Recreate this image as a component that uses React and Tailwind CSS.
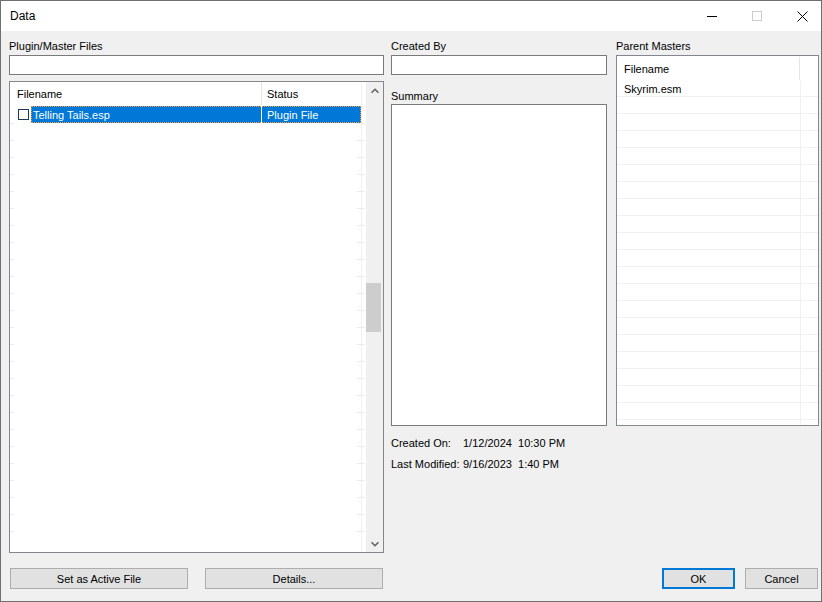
export default function App() {
  const leftTicks = Array.from({ length: 25 }, (_, i) => 123 + 17 * i - 82);
  const rightLines = Array.from({ length: 20 }, (_, i) => i);
  return (
    <div className="w-[822px] h-[602px] border border-[#707070] bg-[#f0f0f0] flex flex-col font-['Liberation_Sans',Arial,sans-serif] text-[11px] text-black overflow-hidden">
      {/* Title bar */}
      <div className="h-[30px] bg-white flex items-center shrink-0">
        <span className="ml-[9px] text-[12px] leading-none">Data</span>
        <div className="ml-auto mr-[13px] flex items-center">
          <svg width="10" height="10" viewBox="0 0 10 10" className="block">
            <path d="M0 5.5H10" stroke="#000" strokeWidth="1" />
          </svg>
          <svg width="10" height="10" viewBox="0 0 10 10" className="block ml-[35px]">
            <rect x="0.5" y="0.5" width="9" height="9" fill="none" stroke="#cccccc" strokeWidth="1" />
          </svg>
          <svg width="11" height="11" viewBox="0 0 11 11" className="block ml-[35px]">
            <path d="M0.5 0.5L10.5 10.5M10.5 0.5L0.5 10.5" stroke="#000" strokeWidth="1" />
          </svg>
        </div>
      </div>

      {/* Body */}
      <div className="flex-1 flex flex-col pl-[8px] pr-[2px] pt-[7px]">
        <div className="flex items-start">
          {/* Left column */}
          <div className="w-[375px] flex flex-col">
            <div className="h-[14px] leading-[16px]">Plugin/Master Files</div>
            <div className="mt-[3px] h-[20px] border border-[#7a7a7a] bg-white" />
            <div className="mt-[6px] h-[472px] border border-[#828790] bg-white flex">
              <div className="relative flex-1">
                {/* header */}
                <div className="h-[23px] pt-[2px] flex items-center relative">
                  <span className="ml-[7px]">Filename</span>
                  <span className="absolute left-[257px]">Status</span>
                  <div className="absolute left-[251px] top-0 h-[23px] w-px bg-[#e5e5e5]" />
                </div>
                {/* vertical grid at right */}
                <div className="absolute left-[351px] top-0 bottom-0 w-px bg-[#f0f0f0]" />
                {leftTicks.map((t) => (
                  <div key={t} className="contents">
                    <div className="absolute left-[347px] w-[8px] h-px bg-[#ececec]" style={{ top: t }} />
                    <div className="absolute left-0 w-[4px] h-px bg-[#ececec]" style={{ top: t }} />
                  </div>
                ))}
                {/* row */}
                <div className="mt-px h-[17px] flex items-center relative">
                  <div className="ml-[8px] w-[11px] h-[11px] border border-[#1f3a55] bg-white" />
                  <div className="absolute left-[21px] top-0 w-[330px] h-[17px] bg-[#0078d7] outline outline-1 outline-dotted outline-[#f59a3c] -outline-offset-1 text-white flex items-center pt-px">
                    <span className="ml-[2px]">Telling Tails.esp</span>
                    <div className="absolute left-[230px] top-0 h-[17px] w-px bg-white" />
                    <span className="absolute left-[236px]">Plugin File</span>
                  </div>
                </div>
              </div>
              {/* scrollbar */}
              <div className="w-[17px] bg-[#f0f0f0] flex flex-col items-start">
                <div className="h-[17px] w-full flex items-center justify-center">
                  <svg width="8" height="6" viewBox="0 0 8 6" className="block">
                    <path d="M0.5 4.8L4 1.3L7.5 4.8" fill="none" stroke="#606060" strokeWidth="1.6" />
                  </svg>
                </div>
                <div className="mt-[184px] w-[15px] h-[49px] bg-[#cdcdcd]" />
                <div className="mt-auto h-[17px] w-full flex items-center justify-center">
                  <svg width="8" height="6" viewBox="0 0 8 6" className="block">
                    <path d="M0.5 1.2L4 4.7L7.5 1.2" fill="none" stroke="#606060" strokeWidth="1.6" />
                  </svg>
                </div>
              </div>
            </div>
          </div>

          {/* Middle column */}
          <div className="ml-[7px] w-[216px] flex flex-col">
            <div className="h-[14px] leading-[16px]">Created By</div>
            <div className="mt-[3px] h-[20px] border border-[#7a7a7a] bg-white" />
            <div className="mt-[13px] h-[14px] leading-[16px]">Summary</div>
            <div className="mt-[2px] h-[322px] border border-[#7a7a7a] bg-white" />
            <div className="mt-[9px] h-[14px] leading-[16px] flex">
              <span className="w-[72px]">Created On:</span>
              <span>1/12/2024&nbsp;&nbsp;10:30 PM</span>
            </div>
            <div className="mt-[7px] h-[14px] leading-[16px] flex">
              <span className="w-[72px]">Last Modified:</span>
              <span>9/16/2023&nbsp;&nbsp;1:40 PM</span>
            </div>
          </div>

          {/* Right column */}
          <div className="ml-[9px] w-[203px] flex flex-col">
            <div className="h-[14px] leading-[16px]">Parent Masters</div>
            <div className="mt-[3px] h-[371px] border border-[#828790] bg-white relative overflow-hidden">
              <div className="h-[24px] pt-[2px] flex items-center relative">
                <span className="ml-[7px]">Filename</span>
                <div className="absolute left-[182px] top-[1px] h-[23px] w-px bg-[#e5e5e5]" />
              </div>
              <div className="absolute left-[183px] top-[25px] bottom-0 w-px bg-[#f0f0f0]" />
              <div className="h-[17px] pt-[2px] flex items-center border-b border-[#f0f0f0]">
                <span className="ml-[7px]">Skyrim.esm</span>
              </div>
              {rightLines.map((i) => (
                <div key={i} className="h-[17px] border-b border-[#f0f0f0]" />
              ))}
            </div>
          </div>
        </div>

        {/* Buttons */}
        <div className="mt-[15px] flex items-center">
          <div className="ml-[1px] w-[178px] h-[21px] pt-px border border-[#adadad] bg-[#e1e1e1] flex items-center justify-center">
            Set as Active File
          </div>
          <div className="ml-[17px] w-[178px] h-[21px] pt-px border border-[#adadad] bg-[#e1e1e1] flex items-center justify-center">
            Details...
          </div>
          <div className="ml-auto w-[73px] h-[21px] pt-px border-2 border-[#0078d7] bg-[#e1e1e1] flex items-center justify-center">
            OK
          </div>
          <div className="ml-[10px] mr-[1px] w-[73px] h-[21px] pt-px border border-[#adadad] bg-[#e1e1e1] flex items-center justify-center">
            Cancel
          </div>
        </div>
      </div>
    </div>
  );
}
